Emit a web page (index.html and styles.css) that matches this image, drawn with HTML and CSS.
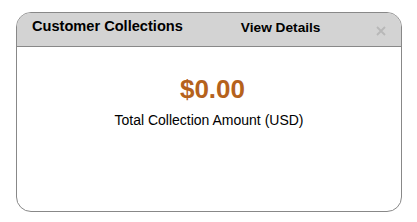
FILE: index.html
```html
<!DOCTYPE html>
<html lang="en">
<head>
    <meta charset="UTF-8">
    <meta name="viewport" content="width=device-width, initial-scale=1.0">
    <title>Customer Collections</title>
    <link rel="stylesheet" href="styles.css">
</head>
<body>
    <div class="widget">
        <div class="widget-header">
            <h3 class="widget-title">Customer Collections</h3>
            <a class="view-details" href="#">View Details</a>
            <span class="close">
                <svg width="10" height="10" viewBox="0 0 10 10">
                    <path d="M1 1 L9 9 M9 1 L1 9" stroke="#b8b8b8" stroke-width="1.8" fill="none"/>
                </svg>
            </span>
        </div>
        <div class="widget-body">
            <div class="amount">$0.00</div>
            <div class="amount-label">Total Collection Amount (USD)</div>
        </div>
    </div>
</body>
</html>
```

FILE: styles.css
```css
body {
    font-family: "Liberation Sans", Arial, sans-serif;
    margin: 0;
    padding: 12px 15px 0 16px;
    background: #fff;
}
.widget {
    width: 384px;
    height: 198px;
    border: 1px solid #888;
    border-radius: 15px;
    overflow: hidden;
    background: #fff;
}
.widget-header {
    display: flex;
    align-items: flex-start;
    height: 33px;
    background-color: #d3d3d3;
    border-bottom: 1px solid #888;
    padding: 0 15px 0 15px;
}
.widget-title {
    margin: 5px 0 0 0;
    font-size: 14.6px;
    font-weight: bold;
    color: #000;
}
.view-details {
    margin: 7px 0 0 58px;
    font-size: 13.7px;
    font-weight: bold;
    color: #000;
    text-decoration: none;
}
.close {
    margin: 13px 0 0 auto;
    line-height: 0;
}
.widget-body {
    text-align: center;
    padding-top: 27px;
}
.amount {
    font-size: 26px;
    font-weight: bold;
    color: #b5621c;
    padding-left: 7px;
}
.amount-label {
    margin-top: 7px;
    font-size: 14px;
    color: #000;
}
```
